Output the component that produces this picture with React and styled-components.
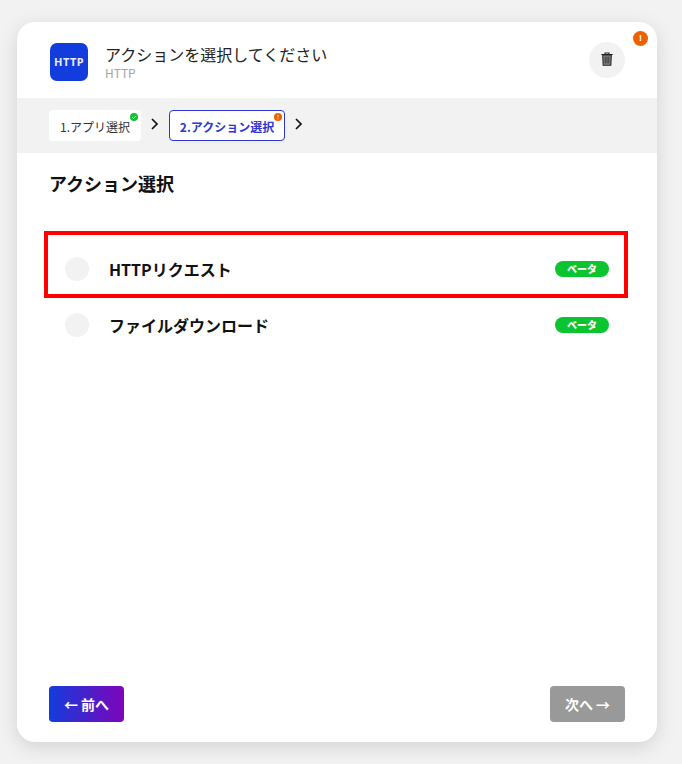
import React from "react";
import styled, { createGlobalStyle } from "styled-components";

const Global = createGlobalStyle`
  html, body { margin: 0; padding: 0; background: #f2f2f2; }
  body { font-family: "Noto Sans CJK JP", "Noto Sans", sans-serif; overflow: hidden; }
`;
const Page = styled.div`
  width: 682px; height: 764px; box-sizing: border-box; padding: 22px 25px 22px 17px; overflow: hidden;
`;
const Card = styled.main`
  position: relative; height: 720px; background: #fff; border-radius: 18px;
  box-shadow: 0 5px 20px rgba(0,0,0,.13); display: flex; flex-direction: column; overflow: visible;
`;
const Alert = styled.div`
  position: absolute; top: 9px; right: 9px; width: 15px; height: 15px; border-radius: 50%;
  background: #ec6000; color: #fff; font: 700 9px/15px "Liberation Sans", sans-serif; text-align: center;
`;
const Header = styled.header`
  height: 76px; box-sizing: border-box; padding: 21px 32px 0 33px; display: flex; align-items: flex-start;
`;
const Logo = styled.div`
  width: 38px; height: 38px; border-radius: 7px; background: #133cdc; color: #e8ecff; flex: none;
  font: 700 11px/38px "Noto Sans", sans-serif; letter-spacing: .4px; text-align: center;
`;
const TitleBlock = styled.div`
  margin-left: 17px; flex: 1; padding-top: 1px;
`;
const Title = styled.div`
  font-size: 16px; line-height: 21px; color: #222; letter-spacing: 0;
`;
const Sub = styled.div`
  font-size: 12px; line-height: 14px; color: #a5a5a5; margin-top: 1px;
`;
const Trash = styled.div`
  width: 36px; height: 36px; margin-top: -1px; padding-bottom: 2px; box-sizing: border-box; border-radius: 50%; background: #f2f2f2;
  display: flex; align-items: center; justify-content: center;
`;
const Steps = styled.nav`
  height: 55px; box-sizing: border-box; background: #f2f2f2; padding: 12px 32px 0; display: flex; align-items: flex-start;
`;
const Step = styled.div`
  position: relative; box-sizing: border-box; height: 31px; border-radius: 4px; background: #fff;
  display: flex; align-items: center; justify-content: center; font-size: 12px; padding-top: 1px;
  width: ${p => p.$w}px;
  font-weight: ${p => (p.$active ? 700 : 400)};
  color: ${p => (p.$active ? "#2c37d6" : "#333")};
  border: ${p => (p.$active ? "1px solid #2c37d6" : "0")};
`;
const Dot = styled.svg`
  position: absolute; top: ${p => p.$top}px; right: ${p => p.$right}px; width: 8px; height: 8px;
`;
const Chevron = styled.svg`
  width: 10px; height: 12px; margin: 8px 9px 0 9px; flex: none;
`;
const Body = styled.section`
  flex: 1; padding: 18px 32px 0; display: flex; flex-direction: column;
`;
const Heading = styled.h2`
  margin: 0; font-size: 18px; line-height: 25px; font-weight: 700; color: #111;
`;
const List = styled.div`
  margin: 45px -3px 0 -5px; position: relative;
`;
const Row = styled.div`
  position: relative; height: 56px; display: flex; align-items: center; padding: 0 19px 0 21px;
`;
const Radio = styled.span`
  width: 24px; height: 24px; border-radius: 50%; background: #f2f2f2; flex: none;
`;
const RowLabel = styled.span`
  margin-left: 20px; flex: 1; font-size: 16px; font-weight: 700; color: #111;
`;
const Beta = styled.span`
  width: 54px; height: 16px; border-radius: 8px; background: #0ac52f; color: #fff; text-align: center;
  font-size: 10px; line-height: 16px; font-weight: 900;
`;
const Highlight = styled.div`
  position: absolute; left: 0; right: 0; top: -10px; height: 67px; box-sizing: border-box;
  border: 4px solid #ff0000; pointer-events: none;
`;
const Footer = styled.footer`
  display: flex; justify-content: space-between; padding: 0 32px 20px;
`;
const NavButton = styled.button`
  width: 75px; height: 36px; border: 0; border-radius: 4px; color: #fff; padding: 0;
  font-family: inherit; font-size: 14px; font-weight: 700;
  background: ${p => (p.$primary ? "linear-gradient(90deg, #133cdc, #7d05b9)" : "#999")};
`;

const Chev = () => (
  <Chevron viewBox="0 0 10 12">
    <path d="M2 1l5 5-5 5" fill="none" stroke="#111" strokeWidth="1.7" />
  </Chevron>
);

export default function App() {
  return (
    <Page>
      <Global />
      <Card>
        <Alert>!</Alert>
        <Header>
          <Logo>HTTP</Logo>
          <TitleBlock>
            <Title>アクションを選択してください</Title>
            <Sub>HTTP</Sub>
          </TitleBlock>
          <Trash>
            <svg width="12" height="14" viewBox="0 0 12 14">
              <path d="M.3 2.5h11.4M4 2.5V1h4v1.5" fill="none" stroke="#222" strokeWidth="1.1" />
              <path d="M1.7 3l.5 10.3h7.6L10.3 3z" fill="#8a8a8a" stroke="#222" strokeWidth="1.1" />
              <path d="M4.2 4.5v7M6 4.5v7M7.8 4.5v7" stroke="#333" strokeWidth="1" />
            </svg>
          </Trash>
        </Header>
        <Steps>
          <Step $w={92}>
            1.アプリ選択
            <Dot $top={3} $right={3} viewBox="0 0 8 8">
              <circle cx="4" cy="4" r="4" fill="#0ac52f" />
              <path d="M2 4.1l1.5 1.5L6 2.8" fill="none" stroke="#fff" strokeWidth="1" />
            </Dot>
          </Step>
          <Chev />
          <Step $w={116} $active>
            2.アクション選択
            <Dot $top={2} $right={2} viewBox="0 0 8 8">
              <circle cx="4" cy="4" r="4" fill="#ec6000" />
              <path d="M4 1.8v2.6M4 5.4v1" stroke="#fff" strokeWidth="1" opacity=".8" />
            </Dot>
          </Step>
          <Chev />
        </Steps>
        <Body>
          <Heading>アクション選択</Heading>
          <List>
            <Row>
              <Radio />
              <RowLabel>HTTPリクエスト</RowLabel>
              <Beta>ベータ</Beta>
            </Row>
            <Row>
              <Radio />
              <RowLabel>ファイルダウンロード</RowLabel>
              <Beta>ベータ</Beta>
            </Row>
            <Highlight />
          </List>
        </Body>
        <Footer>
          <NavButton $primary>← 前へ</NavButton>
          <NavButton>次へ →</NavButton>
        </Footer>
      </Card>
    </Page>
  );
}
